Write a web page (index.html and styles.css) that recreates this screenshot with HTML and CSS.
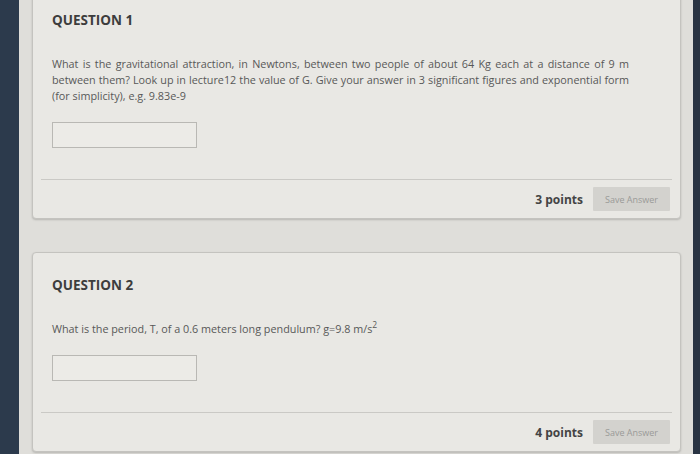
FILE: index.html
```html
<!DOCTYPE html>
<html>
<head>
<meta charset="utf-8">
<link rel="stylesheet" href="styles.css">
</head>
<body>
<div class="strip-left"></div>
<main class="main">
  <section class="card card-first">
    <div class="q-body">
      <h2 class="q-title">QUESTION 1</h2>
      <p class="q-text">What is the gravitational attraction, in Newtons, between two people of about 64 Kg each at a distance of 9 m between them? Look up in lecture12 the value of G. Give your answer in 3 significant figures and exponential form (for simplicity), e.g. 9.83e-9</p>
      <div class="answer"></div>
    </div>
    <div class="divider"></div>
    <div class="footer">
      <span class="points">3 points</span>
      <span class="save">Save Answer</span>
    </div>
  </section>
  <section class="card">
    <div class="q-body">
      <h2 class="q-title">QUESTION 2</h2>
      <p class="q-text">What is the period, T, of a 0.6 meters long pendulum? g=9.8 m/s<sup>2</sup></p>
      <div class="answer"></div>
    </div>
    <div class="divider"></div>
    <div class="footer">
      <span class="points">4 points</span>
      <span class="save">Save Answer</span>
    </div>
  </section>
</main>
<div class="strip-right"></div>
</body>
</html>
```
FILE: styles.css
```css
html, body {
  margin: 0;
  padding: 0;
  height: 454px;
  overflow: hidden;
}
body {
  display: flex;
  background: #dfdeda;
  font-family: "Open Sans", "Liberation Sans", sans-serif;
  color: #555;
}
.strip-left {
  width: 19px;
  flex: none;
  background: #2c3a4c;
}
.strip-right {
  width: 7px;
  flex: none;
  background: #2a3443;
}
.main {
  flex: none;
  width: 649px;
  padding: 0 12px 0 13px;
  display: flex;
  flex-direction: column;
  gap: 33px;
}
.card {
  background: #e9e8e4;
  border: 1px solid #c4c3bf;
  border-radius: 4px;
  box-shadow: 0 1px 2px rgba(0,0,0,0.18);
}
.card-first {
  margin-top: -13px;
}
.q-body {
  padding: 22px 51px 0 19px;
}
.q-title {
  margin: 0;
  font-size: 13.5px;
  line-height: 20px;
  font-weight: 700;
  color: #3d3d3d;
}
.q-text {
  margin: 26px 0 0 0;
  font-size: 10.8px;
  line-height: 16px;
  color: #585858;
  text-align: justify;
}
.q-text sup {
  font-size: 8.5px;
  line-height: 0;
}
.answer {
  margin-top: 18px;
  width: 143px;
  height: 24px;
  border: 1px solid #b9b8b4;
  background: #ecebe7;
}
.divider {
  margin: 31px 8px 0 8px;
  border-top: 1px solid #cac9c5;
}
.footer {
  display: flex;
  justify-content: flex-end;
  align-items: center;
  gap: 10px;
  padding: 7px 10px 7px 10px;
}
.points {
  font-size: 12px;
  font-weight: 700;
  color: #444;
}
.save {
  width: 77px;
  height: 24px;
  display: flex;
  align-items: center;
  justify-content: center;
  background: #d3d2ce;
  color: #9a9a98;
  font-size: 9px;
  border-radius: 1px;
}
```
